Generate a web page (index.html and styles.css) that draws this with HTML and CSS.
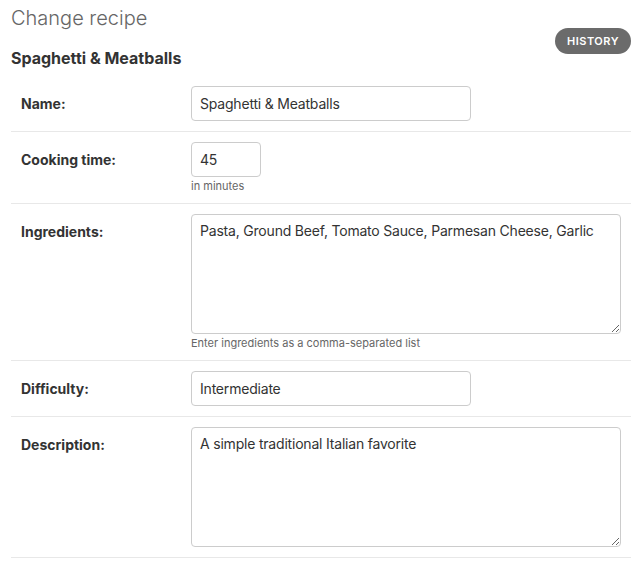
FILE: index.html
```html
<!DOCTYPE html>
<html>
<head>
<meta charset="utf-8">
<title>Change recipe</title>
<link rel="stylesheet" href="styles.css">
</head>
<body>
<div class="content">
  <h1 class="title">Change recipe</h1>
  <div class="toolbar">
    <h2 class="subtitle">Spaghetti &amp; Meatballs</h2>
    <a class="history" href="#">History</a>
  </div>
  <form class="form">
    <div class="row">
      <label class="label">Name:</label>
      <div class="field">
        <input class="input input-wide" type="text" value="Spaghetti &amp; Meatballs">
      </div>
    </div>
    <div class="row">
      <label class="label">Cooking time:</label>
      <div class="field">
        <input class="input input-small" type="text" value="45">
        <div class="help">in minutes</div>
      </div>
    </div>
    <div class="row">
      <label class="label">Ingredients:</label>
      <div class="field">
        <textarea class="textarea">Pasta, Ground Beef, Tomato Sauce, Parmesan Cheese, Garlic</textarea>
        <div class="help">Enter ingredients as a comma-separated list</div>
      </div>
    </div>
    <div class="row">
      <label class="label">Difficulty:</label>
      <div class="field">
        <input class="input input-wide" type="text" value="Intermediate">
      </div>
    </div>
    <div class="row">
      <label class="label">Description:</label>
      <div class="field">
        <textarea class="textarea">A simple traditional Italian favorite</textarea>
      </div>
    </div>
  </form>
</div>
</body>
</html>
```

FILE: styles.css
```css
html, body {
  margin: 0;
  padding: 0;
  background: #fff;
}
body {
  font-family: Inter, "Liberation Sans", sans-serif;
  color: #333;
}
.content {
  padding: 0 13px 0 11px;
}
.title {
  margin: 0;
  padding-top: 6px;
  font-size: 20px;
  line-height: 24px;
  font-weight: 300;
  color: #666;
}
.toolbar {
  display: flex;
  justify-content: space-between;
  align-items: flex-start;
  margin-top: -2px;
}
.subtitle {
  margin: 20px 0 0 0;
  font-size: 16px;
  line-height: 20px;
  font-weight: 700;
  color: #333;
}
.history {
  display: block;
  height: 26px;
  line-height: 26px;
  padding: 0 12px;
  border-radius: 13px;
  background: #6b6b6b;
  color: #fff;
  font-size: 11px;
  font-weight: 600;
  letter-spacing: 0.5px;
  text-transform: uppercase;
  text-decoration: none;
}
.form {
  margin-top: 8px;
}
.row {
  display: flex;
  padding: 10px;
  border-bottom: 1px solid #e8e8e8;
}
.label {
  width: 160px;
  flex: none;
  padding: 11px 10px 0 0;
  font-size: 14px;
  line-height: 14px;
  font-weight: 700;
  color: #333;
}
.field {
  display: flex;
  flex-direction: column;
  align-items: flex-start;
}
.input, .textarea {
  box-sizing: border-box;
  border: 1px solid #ccc;
  border-radius: 4px;
  padding: 0 8px;
  font-family: Inter, "Liberation Sans", sans-serif;
  font-size: 14px;
  letter-spacing: -0.2px;
  color: #333;
  background: #fff;
  margin: 0;
}
.input {
  height: 35px;
}
.input-wide {
  width: 280px;
}
.input-small {
  width: 70px;
}
.textarea {
  display: block;
  width: 430px;
  height: 120px;
  padding: 7px 8px;
  line-height: 18px;
  resize: both;
}
.help {
  margin-top: 3px;
  font-size: 11px;
  line-height: 13px;
  color: #666;
}
```
